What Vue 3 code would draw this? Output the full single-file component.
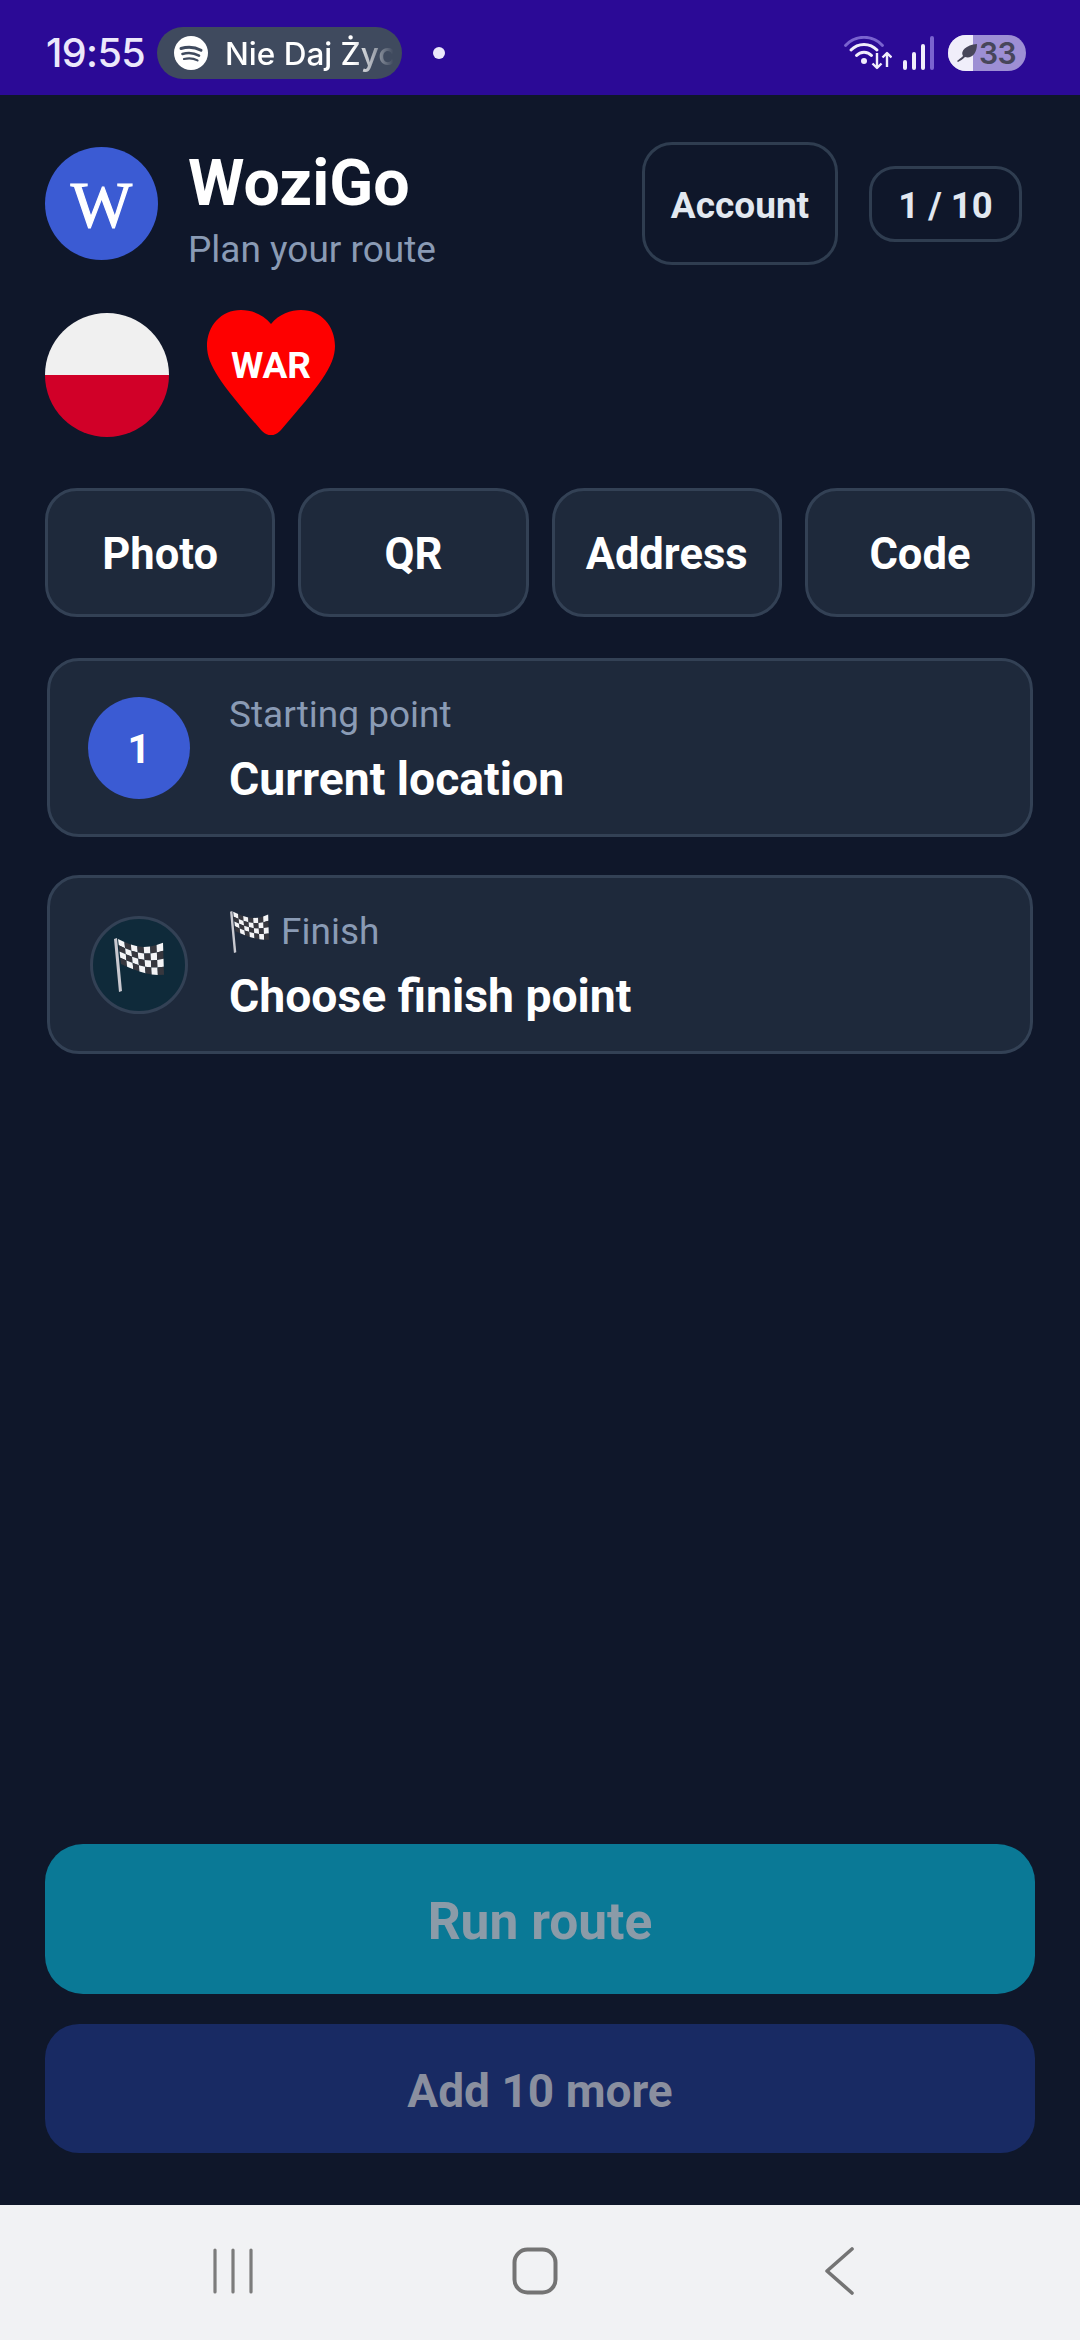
<script setup>
const cols = 7
const rows = 4
const top = (u) => 1 + 8 * Math.sin(u * Math.PI * 0.85)
const bottom = (u) => 26 + 11 * Math.sin(u * Math.PI * 0.55)
const pt = (u, v) => {
  const x = 5 + v * 3 + u * (45 - v * 2)
  const y = top(u) + v * (bottom(u) - top(u))
  return `${x.toFixed(2)},${y.toFixed(2)}`
}
const cells = []
for (let r = 0; r < rows; r++) {
  for (let c = 0; c < cols; c++) {
    const u0 = c / cols
    const u1 = (c + 1) / cols
    const v0 = r / rows
    const v1 = (r + 1) / rows
    cells.push({
      id: `${r}-${c}`,
      points: [pt(u0, v0), pt(u1, v0), pt(u1, v1), pt(u0, v1)].join(' '),
      fill: (r + c) % 2 === 0 ? '#f4f4f6' : '#37373e'
    })
  }
}
const actions = ['Photo', 'QR', 'Address', 'Code']
</script>

<template>
  <div class="screen">
    <header class="status">
      <span class="time">19:55</span>
      <div class="media-pill">
        <svg class="spotify" viewBox="0 0 34 34">
          <circle cx="17" cy="17" r="17" fill="#fff" />
          <path d="M7 12.500c6.500-2 14-1.500 20 1.800" fill="none" stroke="#3f4a5e" stroke-width="3" stroke-linecap="round" />
          <path d="M8.500 18c5.500-1.600 11.500-1.100 16.500 1.700" fill="none" stroke="#3f4a5e" stroke-width="2.600" stroke-linecap="round" />
          <path d="M10 23c4.500-1.200 9.500-.8 13.500 1.400" fill="none" stroke="#3f4a5e" stroke-width="2.200" stroke-linecap="round" />
        </svg>
        <span class="track">Nie Daj Życ</span>
      </div>
      <span class="dot"></span>
      <div class="status-right">
        <svg class="wifi" viewBox="0 0 48 34">
          <path d="M1.500 9.500C11 -1.500 29 -1.500 38.500 9.500" fill="none" stroke="#7a63cf" stroke-width="2.800" stroke-linecap="round" />
          <path d="M7 14C14 6.500 26 6.500 33 14" fill="none" stroke="#f0edfb" stroke-width="3" stroke-linecap="round" />
          <path d="M12.500 19.500C16.500 15 23.500 15 27.500 19.500" fill="none" stroke="#f0edfb" stroke-width="3" stroke-linecap="round" />
          <circle cx="20" cy="25" r="3" fill="#f0edfb" />
          <path d="M33 17V32M28.500 27.500L33 32L37.500 27.500M43 31V17M38.500 21.500L43 17L47.500 21.500" fill="none" stroke="#f0edfb" stroke-width="2.400" stroke-linejoin="round" />
        </svg>
        <svg class="signal" viewBox="0 0 31 34">
          <rect x="0" y="24" width="4" height="10" rx="2" fill="#f0edfb" />
          <rect x="9" y="16" width="4" height="18" rx="2" fill="#f0edfb" />
          <rect x="18" y="8" width="4" height="26" rx="2" fill="#f0edfb" />
          <rect x="27" y="0" width="4" height="34" rx="2" fill="#7a63cf" />
        </svg>
        <div class="battery">
          <span class="battery-fill">
            <svg class="leaf" viewBox="0 0 20 18">
              <path d="M0 17C4 14 5 13 6 12C3 7 9 1 20 0C20 10 14 15 8 13C6 15 3 17 1 18Z" fill="#47465a" />
            </svg>
          </span>
          <span class="battery-num">33</span>
        </div>
      </div>
    </header>

    <main class="main">
      <section class="head">
        <div class="avatar">W</div>
        <div class="brand">
          <h1 class="title">WoziGo</h1>
          <p class="subtitle">Plan your route</p>
        </div>
        <button class="account">Account</button>
        <div class="counter">1 / 10</div>
      </section>

      <section class="badges">
        <div class="pl-flag"></div>
        <svg class="heart" viewBox="0 0 128 125">
          <path d="M64 14C72 4 84 0 94 0C114 0 128 16 128 36C128 56 112 76 74 120C68 127 60 127 54 120C16 76 0 56 0 36C0 16 14 0 34 0C44 0 56 4 64 14Z" fill="#fe0000" />
          <text x="64" y="68" text-anchor="middle" class="war">WAR</text>
        </svg>
      </section>

      <nav class="actions">
        <button v-for="a in actions" :key="a" class="action">{{ a }}</button>
      </nav>

      <section class="stops">
        <div class="stop">
          <div class="stop-num">1</div>
          <div class="stop-text">
            <div class="stop-label">Starting point</div>
            <div class="stop-value">Current location</div>
          </div>
        </div>
        <div class="stop">
          <div class="stop-finish">
            <svg class="flag-big" viewBox="0 0 52 54">
              <polygon points="1,1 4,0 9,53 6,54" fill="#c9c9d0" />
              <polygon v-for="c in cells" :key="c.id" :points="c.points" :fill="c.fill" />
            </svg>
          </div>
          <div class="stop-text">
            <div class="stop-label finish-label">
              <svg class="flag-small" viewBox="0 0 52 54">
                <polygon points="1,1 4,0 9,53 6,54" fill="#c9c9d0" />
                <polygon v-for="c in cells" :key="c.id" :points="c.points" :fill="c.fill" />
              </svg>
              <span>Finish</span>
            </div>
            <div class="stop-value">Choose finish point</div>
          </div>
        </div>
      </section>

      <div class="spacer"></div>

      <button class="run">Run route</button>
      <button class="more">Add 10 more</button>
    </main>

    <footer class="navbar">
      <svg class="nav-recent" viewBox="0 0 40 46">
        <path d="M2 2V44M20 2V44M38 2V44" stroke="#7c7c7c" stroke-width="3.200" stroke-linecap="round" fill="none" />
      </svg>
      <svg class="nav-home" viewBox="0 0 46 48">
        <rect x="2.500" y="2.500" width="41" height="43" rx="13" stroke="#747474" stroke-width="4" fill="none" />
      </svg>
      <svg class="nav-back" viewBox="0 0 32 48">
        <path d="M29 2L4 24L29 46" stroke="#747474" stroke-width="3.600" stroke-linecap="round" stroke-linejoin="round" fill="none" />
      </svg>
    </footer>
  </div>
</template>

<style>
html, body { margin: 0; background: #0f172a; }
</style>

<style scoped>
* { box-sizing: border-box; }
.screen {
  width: 1080px;
  height: 2340px;
  display: flex;
  flex-direction: column;
  background: #0f172a;
  font-family: Roboto, "Noto Sans", sans-serif;
  overflow: hidden;
}
.status {
  height: 95px;
  flex: none;
  background: #2b0a96;
  display: flex;
  align-items: center;
  padding: 11px 54px 0 46px;
  color: #ece8fb;
}
.time {
  font-family: Inter, Roboto, sans-serif;
  font-size: 39.500px;
  font-weight: 500;
  letter-spacing: -0.6px;
  width: 111px;
  flex: none;
}
.media-pill {
  width: 245px;
  height: 52px;
  border-radius: 26px;
  background: #3f4a5e;
  display: flex;
  align-items: center;
  padding-left: 17px;
  gap: 17px;
  flex: none;
}
.spotify { width: 34px; height: 34px; flex: none; }
.track {
  white-space: nowrap;
  font-family: Inter, Roboto, sans-serif;
  font-size: 31.500px;
  font-weight: 500;
  color: #fff;
  -webkit-mask-image: linear-gradient(90deg, #000 74%, rgba(0,0,0,.55) 86%, transparent 98%);
  mask-image: linear-gradient(90deg, #000 74%, rgba(0,0,0,.55) 86%, transparent 98%);
}
.dot {
  width: 12px;
  height: 12px;
  border-radius: 50%;
  background: #ece8fb;
  margin-left: 31px;
  flex: none;
}
.status-right {
  margin-left: auto;
  display: flex;
  align-items: center;
}
.wifi { width: 48px; height: 34px; flex: none; }
.signal { width: 31px; height: 34px; margin-left: 11px; flex: none; }
.battery {
  width: 78px;
  height: 36px;
  margin-left: 14px;
  border-radius: 18px;
  overflow: hidden;
  background: #9d8fd4;
  display: flex;
  align-items: center;
  flex: none;
}
.battery-fill {
  width: 25px;
  height: 100%;
  background: #f0eefa;
  display: block;
  position: relative;
  flex: none;
}
.leaf {
  position: absolute;
  left: 9px;
  top: 9px;
  width: 20px;
  height: 18px;
}
.battery-num {
  margin-left: 6px;
  font-family: Inter, Roboto, sans-serif;
  font-size: 30px;
  font-weight: 600;
  color: #47465a;
  letter-spacing: -0.5px;
}
.main {
  flex: 1;
  min-height: 0;
  display: flex;
  flex-direction: column;
  padding: 47px 45px 52px;
}
.head {
  display: flex;
  align-items: center;
  height: 123px;
}
.avatar {
  width: 113px;
  height: 113px;
  border-radius: 50%;
  background: #3b5bd3;
  color: #fff;
  font-family: "Liberation Serif", serif;
  font-weight: 400;
  font-size: 65px;
  -webkit-text-stroke: 1.200px #fff;
  display: flex;
  align-items: center;
  justify-content: center;
  padding-top: 3px;
  flex: none;
}
.brand {
  margin-left: 30px;
  padding-top: 10px;
  flex: 1;
}
.title {
  margin: 0;
  font-size: 64.500px;
  font-weight: 700;
  line-height: 76px;
  color: #fff;
}
.subtitle {
  margin: 6px 0 0;
  font-size: 37px;
  line-height: 46px;
  color: #8a9bb5;
}
.account {
  width: 196px;
  height: 123px;
  border-radius: 30px;
  border: 3px solid #2f3d50;
  background: transparent;
  color: #e2e8f0;
  font-family: inherit;
  font-size: 37px;
  font-weight: 700;
  padding: 3px 0 0;
  flex: none;
}
.counter {
  width: 153px;
  height: 76px;
  margin-left: 31px;
  margin-right: 13px;
  border-radius: 26px;
  border: 3px solid #2f3d50;
  color: #e2e8f0;
  font-size: 36.500px;
  font-weight: 700;
  display: flex;
  align-items: center;
  justify-content: center;
  padding-top: 3px;
  flex: none;
}
.badges {
  display: flex;
  align-items: flex-end;
  margin-top: 45px;
  height: 127px;
  gap: 38px;
}
.pl-flag {
  width: 124px;
  height: 124px;
  border-radius: 50%;
  background: linear-gradient(180deg, #f0f0f0 50%, #d10028 50%);
  flex: none;
}
.heart {
  width: 128px;
  height: 125px;
  margin-bottom: 2px;
  flex: none;
}
.war {
  font-family: Roboto, sans-serif;
  font-weight: 700;
  font-size: 37px;
  fill: #fff;
}
.actions {
  display: grid;
  grid-template-columns: repeat(4, 1fr);
  gap: 23px;
  margin-top: 51px;
}
.action {
  height: 129px;
  border-radius: 32px;
  border: 3px solid #334155;
  background: #1e293b;
  color: #fff;
  font-family: inherit;
  font-size: 43.500px;
  font-weight: 700;
  padding: 4px 0 0;
}
.stops {
  display: flex;
  flex-direction: column;
  gap: 38px;
  margin: 41px 2px 0;
}
.stop {
  height: 179px;
  border-radius: 32px;
  border: 3px solid #334155;
  background: #1e293b;
  display: flex;
  align-items: center;
  padding-left: 38px;
}
.stop-num {
  width: 102px;
  height: 102px;
  border-radius: 50%;
  background: #3b5bd3;
  color: #fff;
  font-size: 40px;
  font-weight: 700;
  display: flex;
  align-items: center;
  justify-content: center;
  padding-top: 4px;
  flex: none;
}
.stop-finish {
  width: 98px;
  height: 98px;
  margin: 0 2px;
  border-radius: 50%;
  background: #0f2a3a;
  border: 3px solid #334155;
  display: flex;
  align-items: center;
  justify-content: center;
  flex: none;
}
.flag-big { width: 52px; height: 54px; }
.stop-text {
  margin-left: 39px;
  padding-top: 3px;
}
.stop-label {
  height: 48px;
  font-size: 37px;
  line-height: 48px;
  color: #8a9bb5;
}
.finish-label {
  display: flex;
  align-items: center;
  gap: 11px;
}
.flag-small { width: 41px; height: 42px; flex: none; }
.stop-value {
  margin-top: 12px;
  font-size: 46.300px;
  line-height: 56px;
  font-weight: 700;
  color: #fff;
}
.spacer { flex: 1; }
.run {
  height: 150px;
  flex: none;
  border: 0;
  border-radius: 38px;
  background: #0a7996;
  color: #8b9ba8;
  font-family: inherit;
  font-size: 51.500px;
  font-weight: 700;
  padding: 4px 0 0;
}
.more {
  height: 129px;
  flex: none;
  margin-top: 30px;
  border: 0;
  border-radius: 34px;
  background: #182a63;
  color: #8a8f9f;
  font-family: inherit;
  font-size: 46px;
  font-weight: 700;
  padding: 4px 0 0;
}
.navbar {
  height: 135px;
  flex: none;
  background: #f1f2f4;
  display: flex;
  align-items: center;
  padding: 0 0 4px 213px;
}
.nav-recent { width: 40px; height: 46px; flex: none; }
.nav-home { width: 46px; height: 48px; margin-left: 259px; flex: none; }
.nav-back { width: 32px; height: 48px; margin-left: 265px; flex: none; }
</style>
